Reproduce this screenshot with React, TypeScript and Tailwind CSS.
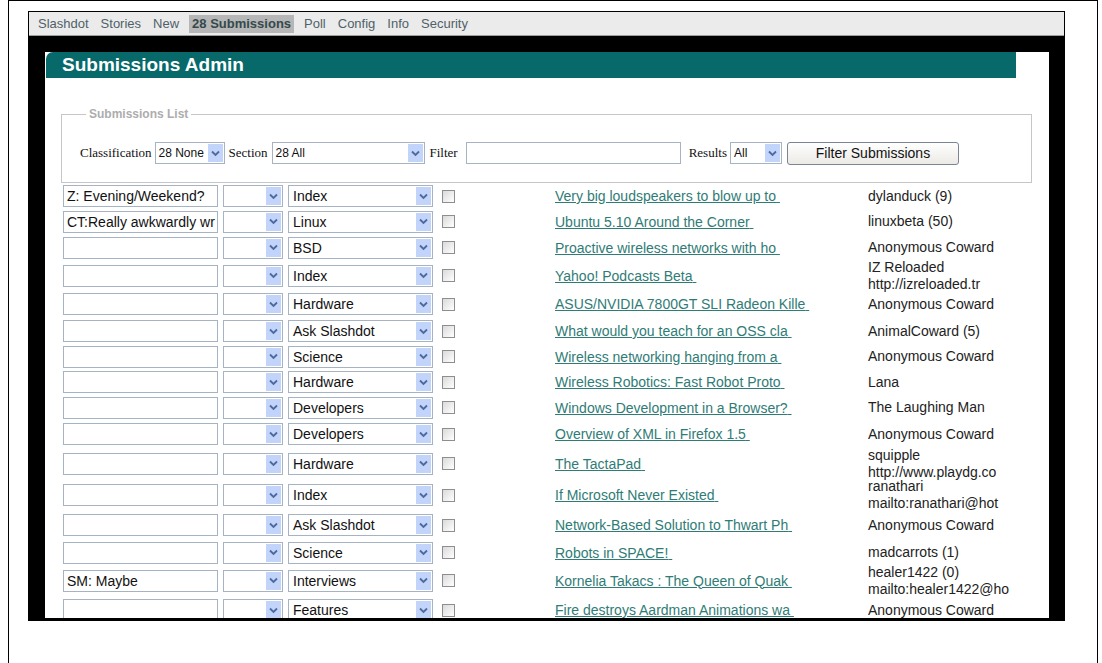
import React from 'react';

type Submission = {
  note?: string;
  section: string;
  title: string;
  author: string[];
  h: string;
};

const navItems = ['Slashdot', 'Stories', 'New', '28 Submissions', 'Poll', 'Config', 'Info', 'Security'];

const submissions: Submission[] = [
  { note: 'Z: Evening/Weekend?', section: 'Index', title: 'Very big loudspeakers to blow up to', author: ['dylanduck (9)'], h: 'h-[26px]' },
  { note: 'CT:Really awkwardly wr', section: 'Linux', title: 'Ubuntu 5.10 Around the Corner', author: ['linuxbeta (50)'], h: 'h-[25px]' },
  { section: 'BSD', title: 'Proactive wireless networks with ho', author: ['Anonymous Coward'], h: 'h-[27px]' },
  { section: 'Index', title: 'Yahoo! Podcasts Beta', author: ['IZ Reloaded', 'http://izreloaded.tr'], h: 'h-[29px]' },
  { section: 'Hardware', title: 'ASUS/NVIDIA 7800GT SLI Radeon Kille', author: ['Anonymous Coward'], h: 'h-[28px]' },
  { section: 'Ask Slashdot', title: 'What would you teach for an OSS cla', author: ['AnimalCoward (5)'], h: 'h-[26px]' },
  { section: 'Science', title: 'Wireless networking hanging from a', author: ['Anonymous Coward'], h: 'h-[25px]' },
  { section: 'Hardware', title: 'Wireless Robotics: Fast Robot Proto', author: ['Lana'], h: 'h-[26px]' },
  { section: 'Developers', title: 'Windows Development in a Browser?', author: ['The Laughing Man'], h: 'h-[25px]' },
  { section: 'Developers', title: 'Overview of XML in Firefox 1.5', author: ['Anonymous Coward'], h: 'h-[28px]' },
  { section: 'Hardware', title: 'The TactaPad', author: ['squipple', 'http://www.playdg.co'], h: 'h-[31px]' },
  { section: 'Index', title: 'If Microsoft Never Existed', author: ['ranathari', 'mailto:ranathari@hot'], h: 'h-[32px]' },
  { section: 'Ask Slashdot', title: 'Network-Based Solution to Thwart Ph', author: ['Anonymous Coward'], h: 'h-[28px]' },
  { section: 'Science', title: 'Robots in SPACE!', author: ['madcarrots (1)'], h: 'h-[27px]' },
  { note: 'SM: Maybe', section: 'Interviews', title: 'Kornelia Takacs : The Queen of Quak', author: ['healer1422 (0)', 'mailto:healer1422@ho'], h: 'h-[29px]' },
  { section: 'Features', title: 'Fire destroys Aardman Animations wa', author: ['Anonymous Coward'], h: 'h-[30px]' },
];

// XP style combo button
const DropButton = () => (
  <span className="flex h-full w-[17px] shrink-0 items-center justify-center border border-white bg-[#c3d4fb]">
    <svg width="9" height="7" viewBox="0 0 9 7">
      <path d="M1 1.5 4.5 5 8 1.5" fill="none" stroke="#4d6a9e" strokeWidth="1.8" />
    </svg>
  </span>
);

const Combo = ({ value, className, small }: { value?: string; className: string; small?: boolean }) => (
  <div className={`flex h-[22px] shrink-0 items-stretch border border-[#a5b3c2] bg-white ${className}`}>
    <span
      className={`flex-1 overflow-hidden whitespace-nowrap leading-[20px] text-[#111] ${small ? 'pl-[3px] text-[12px]' : 'pl-[4px] text-[14px]'}`}
    >
      {value}
    </span>
    <DropButton />
  </div>
);

const App = () => {
  return (
    <div className="h-[663px] overflow-hidden bg-white font-['Liberation_Sans',Arial,sans-serif]">
      <div className="ml-[8px] h-[663px] w-[1090px] border-l border-r border-t border-black">
        <div className="ml-[19px] mt-[10px] w-[1037px] bg-black px-[1px] pb-[3px] pt-[1px]">

            {/* admin menu */}
            <div className="flex h-[24px] items-center gap-[8px] border-b border-[#9c9c9c] bg-[#ebebeb] pl-[7px] text-[13px] text-[#4f6168]">
              {navItems.map((item) =>
                item === '28 Submissions' ? (
                  <span key={item} className="bg-[#b6b6b6] px-[3px] font-bold leading-[18px] text-[#34494b]">
                    {item}
                  </span>
                ) : (
                  <span key={item} className="px-[2px]">
                    {item}
                  </span>
                )
              )}
            </div>

            <div className="h-[16px]" />

            <div className="ml-[16px] mr-[15px] h-[566px] overflow-hidden bg-white">
              <div className="ml-[1px] h-[26px] w-[970px] rounded-tl-[7px] bg-[#07696a] pl-[16px] text-[19px] font-bold leading-[26px] text-white">
                Submissions Admin
              </div>

              <fieldset className="ml-[16px] mt-[29px] w-[971px] border border-[#c6c6c6] pb-[18px] pl-[18px]">
                <legend className="ml-[6px] px-[3px] text-[12px] font-bold leading-[14px] text-[#adadad]">
                  Submissions List
                </legend>
                <div className="mt-[21px] flex h-[22px] items-center text-[13px] text-[#111]">
                  <span className="font-['Liberation_Serif',serif]">Classification</span>
                  <Combo className="ml-[3px] w-[70px]" value="28 None" small />
                  <span className="ml-[4px] font-['Liberation_Serif',serif]">Section</span>
                  <Combo className="ml-[4px] w-[153px]" value="28 All" small />
                  <span className="ml-[5px] font-['Liberation_Serif',serif]">Filter</span>
                  <div className="ml-[8px] h-[22px] w-[215px] border border-[#a5b3c2] bg-white" />
                  <span className="ml-[8px] font-['Liberation_Serif',serif]">Results</span>
                  <Combo className="ml-[3px] w-[52px]" value="All" small />
                  <button className="ml-[5px] h-[23px] w-[172px] rounded-[3px] border border-[#7a8594] bg-linear-to-b from-white to-[#ebeae5] text-[14px] text-[#111]">
                    Filter Submissions
                  </button>
                </div>
              </fieldset>

              <div className="ml-[18px]">
                {submissions.map((s, i) => (
                  <div key={i} className={`flex items-center ${s.h}`}>
                    <div className="h-[22px] w-[155px] shrink-0 overflow-hidden whitespace-nowrap border border-[#a5b3c2] bg-white pl-[3px] text-[14px] leading-[20px] text-[#111]">
                      {s.note}
                    </div>
                    <Combo className="ml-[5px] w-[60px]" />
                    <Combo className="ml-[5px] w-[145px]" value={s.section} />
                    <span className="ml-[9px] h-[13px] w-[13px] shrink-0 border border-[#8e8e8e] bg-linear-to-br from-[#dadada] to-white" />
                    <div className="ml-[100px] w-[313px] shrink-0 whitespace-nowrap">
                      <a href="#" className="text-[14px] text-[#2f7c76] underline">
                        {s.title}&nbsp;
                      </a>
                    </div>
                    <div className="whitespace-nowrap text-[14px] leading-[17px] text-[#222]">
                      {s.author.map((line) => (
                        <div key={line}>{line}</div>
                      ))}
                    </div>
                  </div>
                ))}
              </div>
            </div>

        </div>
      </div>
    </div>
  );
};

export default App;
